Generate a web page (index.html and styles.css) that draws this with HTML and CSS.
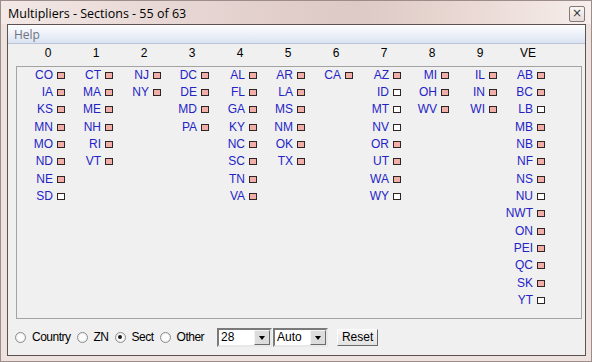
FILE: index.html
```html
<!DOCTYPE html>
<html>
<head>
<meta charset="utf-8"/>
    <title>Multipliers - Sections</title>
    <link rel="stylesheet" href="styles.css">
</head>
<body>
<div class="window">
    <div class="titlebar">
        <span class="caption">Multipliers - Sections - 55 of 63</span>
        <span class="close">&#215;</span>
    </div>
    <div class="client">
        <div class="menubar"><span class="menu">Help</span></div>
        <div class="heads">
            <div class="head">0</div><div class="head">1</div><div class="head">2</div>
            <div class="head">3</div><div class="head">4</div><div class="head">5</div>
            <div class="head">6</div><div class="head">7</div><div class="head">8</div>
            <div class="head">9</div><div class="head">VE</div>
        </div>
        <div class="panel">
            <div class="col">
                <div class="item">CO<i class="box on"></i></div>
                <div class="item">IA<i class="box on"></i></div>
                <div class="item">KS<i class="box on"></i></div>
                <div class="item">MN<i class="box on"></i></div>
                <div class="item">MO<i class="box on"></i></div>
                <div class="item">ND<i class="box on"></i></div>
                <div class="item">NE<i class="box on"></i></div>
                <div class="item">SD<i class="box"></i></div>
            </div>
            <div class="col">
                <div class="item">CT<i class="box on"></i></div>
                <div class="item">MA<i class="box on"></i></div>
                <div class="item">ME<i class="box on"></i></div>
                <div class="item">NH<i class="box on"></i></div>
                <div class="item">RI<i class="box on"></i></div>
                <div class="item">VT<i class="box on"></i></div>
            </div>
            <div class="col">
                <div class="item">NJ<i class="box on"></i></div>
                <div class="item">NY<i class="box on"></i></div>
            </div>
            <div class="col">
                <div class="item">DC<i class="box on"></i></div>
                <div class="item">DE<i class="box on"></i></div>
                <div class="item">MD<i class="box on"></i></div>
                <div class="item">PA<i class="box on"></i></div>
            </div>
            <div class="col">
                <div class="item">AL<i class="box on"></i></div>
                <div class="item">FL<i class="box on"></i></div>
                <div class="item">GA<i class="box on"></i></div>
                <div class="item">KY<i class="box on"></i></div>
                <div class="item">NC<i class="box on"></i></div>
                <div class="item">SC<i class="box on"></i></div>
                <div class="item">TN<i class="box on"></i></div>
                <div class="item">VA<i class="box on"></i></div>
            </div>
            <div class="col">
                <div class="item">AR<i class="box on"></i></div>
                <div class="item">LA<i class="box on"></i></div>
                <div class="item">MS<i class="box on"></i></div>
                <div class="item">NM<i class="box on"></i></div>
                <div class="item">OK<i class="box on"></i></div>
                <div class="item">TX<i class="box on"></i></div>
            </div>
            <div class="col">
                <div class="item">CA<i class="box on"></i></div>
            </div>
            <div class="col">
                <div class="item">AZ<i class="box on"></i></div>
                <div class="item">ID<i class="box"></i></div>
                <div class="item">MT<i class="box"></i></div>
                <div class="item">NV<i class="box"></i></div>
                <div class="item">OR<i class="box on"></i></div>
                <div class="item">UT<i class="box on"></i></div>
                <div class="item">WA<i class="box on"></i></div>
                <div class="item">WY<i class="box"></i></div>
            </div>
            <div class="col">
                <div class="item">MI<i class="box on"></i></div>
                <div class="item">OH<i class="box on"></i></div>
                <div class="item">WV<i class="box on"></i></div>
            </div>
            <div class="col">
                <div class="item">IL<i class="box on"></i></div>
                <div class="item">IN<i class="box on"></i></div>
                <div class="item">WI<i class="box on"></i></div>
            </div>
            <div class="col">
                <div class="item">AB<i class="box on"></i></div>
                <div class="item">BC<i class="box on"></i></div>
                <div class="item">LB<i class="box"></i></div>
                <div class="item">MB<i class="box on"></i></div>
                <div class="item">NB<i class="box on"></i></div>
                <div class="item">NF<i class="box on"></i></div>
                <div class="item">NS<i class="box on"></i></div>
                <div class="item">NU<i class="box"></i></div>
                <div class="item">NWT<i class="box on"></i></div>
                <div class="item">ON<i class="box on"></i></div>
                <div class="item">PEI<i class="box on"></i></div>
                <div class="item">QC<i class="box on"></i></div>
                <div class="item">SK<i class="box on"></i></div>
                <div class="item">YT<i class="box"></i></div>
            </div>
        </div>
        <div class="controls">
            <span class="opt"><i class="radio"></i>Country</span>
            <span class="opt"><i class="radio"></i>ZN</span>
            <span class="opt"><i class="radio checked"></i>Sect</span>
            <span class="opt"><i class="radio"></i>Other</span>
            <span class="combo first"><span class="value">28</span><span class="arrow"></span></span>
            <span class="combo"><span class="value">Auto</span><span class="arrow"></span></span>
            <span class="button">Reset</span>
        </div>
    </div>
</div>
</body>
</html>
```

FILE: styles.css
```css
body {
    margin:0px;
    width:592px;
    height:362px;
    overflow:hidden;
}

.window {
    box-sizing:border-box;
    width:592px;
    height:362px;
    padding:0px 5px 5px 6px;
    border:1px solid #9c8c8a;
    background:#eee2df;
    display:flex;
    flex-direction:column;
}

.titlebar {
    height:23px;
    margin:0px -5px 0px -6px;
    padding:0px 6px 0px 7px;
    display:flex;
    align-items:center;
    justify-content:space-between;
    background:linear-gradient(90deg, #f3e9e7 0%, #eadcd9 20%, #e4d2cf 40%, #ddc9c5 60%, #ead9d4 80%, #f6eeeb 100%);
}
.caption {
    font-family:"Open Sans", "Liberation Sans", sans-serif;
    font-size:12.5px;
    color:#000;
    padding-top:1px;
}
.close {
    box-sizing:border-box;
    width:16px;
    height:16px;
    border:1px solid #857876;
    border-radius:2px;
    background:linear-gradient(#fbf6f5, #e6dcda);
    font-family:"DejaVu Sans", sans-serif;
    font-size:12px;
    line-height:13px;
    text-align:center;
    color:#333;
    margin-top:2px;
}

.client {
    flex:1;
    border:1px solid #5e5251;
    background:#f0f0f0;
    display:flex;
    flex-direction:column;
}

.menubar {
    height:18px;
    border-bottom:1px solid #b9c4d6;
    background:linear-gradient(#fdfdfe, #e9eef7 60%, #dce4f2);
    padding-left:6px;
}
.menu {
    font-family:"Open Sans", "Liberation Sans", sans-serif;
    font-size:12px;
    line-height:18px;
    color:#6f7480;
}

.heads {
    display:flex;
    height:22px;
    padding-left:16px;
}
.head {
    width:48px;
    text-align:center;
    font-family:"Liberation Sans", Arial, sans-serif;
    font-size:12px;
    line-height:19px;
    color:#000;
}

.panel {
    height:251px;
    margin:0px 3px 0px 8px;
    border:1px solid #a3a3a3;
    padding-left:7px;
    display:flex;
}
.col {
    width:48px;
    margin-top:-1px;
}
.item {
    height:17.33px;
    display:flex;
    align-items:center;
    justify-content:flex-end;
    padding-right:7px;
    font-family:"Liberation Sans", Arial, sans-serif;
    font-size:12px;
    color:#2424c6;
}
.box {
    width:6px;
    height:5px;
    margin-left:4px;
    margin-top:1px;
    border:1px solid #2e2424;
    background:#fff;
}
.box.on {
    background:#f2aea8;
}

.controls {
    flex:1;
    display:flex;
    align-items:center;
    padding-left:7px;
    font-family:"Liberation Sans", sans-serif;
    font-size:12px;
    letter-spacing:-0.5px;
    color:#000;
}
.opt {
    display:flex;
    align-items:center;
    margin-right:6px;
}
.radio {
    box-sizing:border-box;
    width:11px;
    height:11px;
    margin-right:6px;
    border-radius:50%;
    border:1px solid #8d8d8d;
    background:radial-gradient(circle, #ffffff 40%, #dcdcdc 100%);
    position:relative;
}
.radio.checked::after {
    content:"";
    position:absolute;
    left:2.5px;
    top:2.5px;
    width:4px;
    height:4px;
    border-radius:50%;
    background:#1a1a1a;
}

.combo {
    box-sizing:border-box;
    width:55px;
    height:19px;
    margin-right:1px;
    border:2px solid;
    border-color:#7a7a7a #e8e8e8 #e8e8e8 #7a7a7a;
    background:#fff;
    display:flex;
    align-items:center;
    justify-content:space-between;
    letter-spacing:0px;
}
.combo.first {
    margin-left:7px;
}
.value {
    padding-left:2px;
    line-height:15px;
}
.arrow {
    box-sizing:border-box;
    width:16px;
    height:15px;
    border:1px solid;
    border-color:#f4f4f4 #6a6a6a #6a6a6a #f4f4f4;
    background:#dcdcdc;
    position:relative;
}
.arrow::after {
    content:"";
    position:absolute;
    left:4px;
    top:5px;
    border-left:3.5px solid transparent;
    border-right:3.5px solid transparent;
    border-top:4px solid #000;
}

.button {
    box-sizing:border-box;
    width:41px;
    height:17px;
    margin-left:8px;
    border:1px solid;
    border-color:#fdfdfd #6a6a6a #6a6a6a #fdfdfd;
    background:linear-gradient(#f6f6f6, #e2e2e2);
    text-align:center;
    line-height:14px;
    letter-spacing:0px;
}
```
